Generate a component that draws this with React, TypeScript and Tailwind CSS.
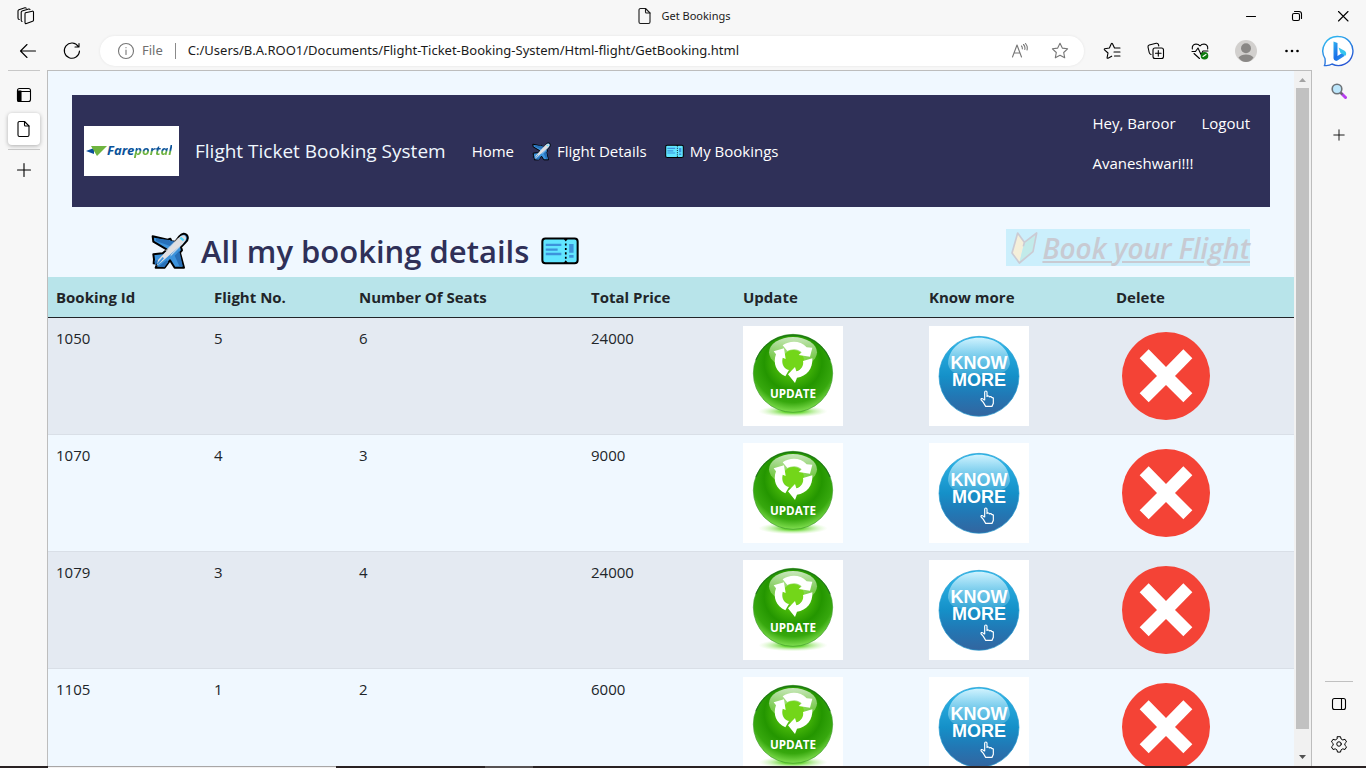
import type { ReactNode } from "react";

type Booking = { id: number; flight: number; seats: number; price: number };

const bookings: Booking[] = [
  { id: 1050, flight: 5, seats: 6, price: 24000 },
  { id: 1070, flight: 4, seats: 3, price: 9000 },
  { id: 1079, flight: 3, seats: 4, price: 24000 },
  { id: 1105, flight: 1, seats: 2, price: 6000 },
];

function Icon({ size = "size-5", children, box = "0 0 20 20" }: { size?: string; children: ReactNode; box?: string }) {
  return (
    <svg
      className={`${size} shrink-0`}
      viewBox={box}
      fill="none"
      stroke="currentColor"
      strokeWidth="1.1"
      strokeLinecap="round"
      strokeLinejoin="round"
      aria-hidden="true"
    >
      {children}
    </svg>
  );
}

function IconButton({ label, className = "w-11", children }: { label: string; className?: string; children: ReactNode }) {
  return (
    <button type="button" aria-label={label} className={`flex h-8 shrink-0 items-center justify-center ${className}`}>
      {children}
    </button>
  );
}

function PageIcon() {
  return (
    <Icon>
      <path d="M5.500 2.500h5l4.500 4.500v9a1.500 1.500 0 0 1-1.500 1.500h-8A1.500 1.500 0 0 1 4 16V4a1.500 1.500 0 0 1 1.500-1.500z" />
      <path d="M10.500 2.500V6A1 1 0 0 0 11.500 7H15" />
    </Icon>
  );
}

function PlusIcon({ size = "size-5" }: { size?: string }) {
  return (
    <Icon size={size}>
      <path d="M10 3.500v13M3.500 10h13" />
    </Icon>
  );
}

function PlaneEmoji({ className }: { className: string }) {
  return (
    <svg className={`${className} shrink-0`} viewBox="334 69 114 114" strokeLinejoin="round" aria-hidden="true">
      <path
        d="M339 82l45 10 8-3 4 8 11 1 12-16c8-9 17-10 22-4 5 6 4 15-4 23l-13 13 3 10-6 7 12 45h-28l-14-22-16 22h-27l5-12-11-1 1-12-2-15 28-3 13-11-41-24z"
        fill="#3c93dc"
        stroke="#000"
        strokeWidth="6"
      />
      <path d="M382 92l25 6-14 14-44-16v-8zM405 140l14-15 10 46h-10zM345 155l15-3-14 18zM357 172l24-18 5 5-12 16z" fill="#2870b8" />
      <path d="M418 86c8-9 16-8 19-4 4 5 2 12-5 19l-66 58-15 12 4-18z" fill="#dfdfe2" />
      <path d="M378 126l40-40M393 140l38-38" stroke="#eeeef0" strokeWidth="3" />
      <path d="M422 86l10 8" stroke="#50d9ff" strokeWidth="7" />
      <path d="M353 166l18-20" stroke="#3c93dc" strokeWidth="5" />
    </svg>
  );
}

function TicketEmoji({ className }: { className: string }) {
  return (
    <svg className={`${className} shrink-0`} viewBox="295 340 112 112" aria-hidden="true">
      <rect x="299" y="359" width="104" height="73" rx="9" fill="#61e5ff" stroke="#000" strokeWidth="6" />
      <path d="M361 359l7 9 7-9zM361 432l7-9 7 9z" fill="#000" />
      <path d="M368 374v46" stroke="#000" strokeWidth="5" strokeDasharray="6 7" />
      <path d="M309 378h46M309 392h35M309 405h46" stroke="#3c93dc" strokeWidth="7" />
      <path d="M378 375h13v26h-13zM378 408h13v8h-13z" fill="#3c93dc" />
    </svg>
  );
}

function LeafEmoji({ className }: { className: string }) {
  return (
    <svg className={`${className} shrink-0`} viewBox="90 66 84 100" strokeLinejoin="round" aria-hidden="true">
      <path d="M113 71l20 28-15 61-22-29z" fill="#f4efda" />
      <path d="M170 71l-37 28-15 61 41-33z" fill="#c2ebea" />
      <path d="M113 71l20 28 37-28-11 56-41 34-22-30zM133 99l-3 12" fill="none" stroke="#cbcbd4" strokeWidth="5" />
    </svg>
  );
}

function UpdateBadge() {
  return (
    <svg className="size-[100px]" viewBox="39 48 300 300" aria-hidden="true">
      <defs>
        <radialGradient id="green" cx=".5" cy=".36" r=".66">
          <stop offset="0" stopColor="#7ade18" />
          <stop offset=".22" stopColor="#50c00c" />
          <stop offset=".55" stopColor="#249600" />
          <stop offset=".78" stopColor="#37a80e" />
          <stop offset="1" stopColor="#8ee85c" />
        </radialGradient>
        <linearGradient id="greenGloss" x2="0" y2="1">
          <stop offset="0" stopColor="#fff" stopOpacity=".75" />
          <stop offset="1" stopColor="#b6f080" stopOpacity=".3" />
        </linearGradient>
        <radialGradient id="glow">
          <stop offset=".3" stopColor="#6fd93c" />
          <stop offset="1" stopColor="#c8f5ad" stopOpacity="0" />
        </radialGradient>
      </defs>
      <path fill="#fff" d="M39 48h300v300H39z" />
      <ellipse cx="189" cy="304" rx="104" ry="18" fill="url(#glow)" />
      <ellipse cx="189" cy="190" rx="119" ry="117" fill="url(#green)" stroke="#3e9a2a" strokeWidth="2" />
      <path d="M78 150A119 117 0 0 1 300 150" fill="none" stroke="#1c701a" strokeWidth="3" />
      <ellipse cx="189" cy="127" rx="72" ry="46" fill="url(#greenGloss)" />
      <circle cx="190" cy="152" r="32" fill="#73d619" />
      <g fill="#fff">
        <path d="M158 106C178 92 210 90 230 112L247 113L240 140L206 135L215 127C202 114 184 117 172 123Z" />
        <path d="M131 124L162 115L167 147L158 143C153 161 162 176 177 180L166 199C138 186 128 160 138 133Z" />
        <path d="M219 153L247 145C249 176 230 200 201 203L195 219L174 193L195 171L199 184C214 180 222 166 219 153Z" />
      </g>
      <text x="189" y="264" textAnchor="middle" fill="#fff" fontFamily="Open Sans, sans-serif" fontWeight="700" fontSize="35">
        UPDATE
      </text>
    </svg>
  );
}

function KnowMoreBadge() {
  return (
    <svg className="size-[100px]" viewBox="597 48 300 300" aria-hidden="true">
      <defs>
        <linearGradient id="blue" x2="0" y2="1">
          <stop offset="0" stopColor="#31b9ea" />
          <stop offset=".5" stopColor="#1590c8" />
          <stop offset=".75" stopColor="#2277b4" />
          <stop offset="1" stopColor="#33659f" />
        </linearGradient>
        <linearGradient id="blueGloss" x2="0" y2="1">
          <stop offset="0" stopColor="#d8f5ff" stopOpacity=".95" />
          <stop offset="1" stopColor="#7fd0ee" stopOpacity=".3" />
        </linearGradient>
      </defs>
      <path fill="#fff" d="M597 48h300v300H597z" />
      <circle cx="747" cy="199" r="120" fill="url(#blue)" stroke="#259bd0" strokeWidth="2" />
      <path d="M654 162C656 110 700 83 747 83S838 110 840 162C830 198 790 192 747 195S662 200 654 162Z" fill="url(#blueGloss)" />
      <g fill="#fff" fontFamily="Liberation Sans, Arial, sans-serif" fontWeight="700" fontSize="54" textAnchor="middle">
        <text x="747" y="177">KNOW</text>
        <text x="747" y="229">MORE</text>
      </g>
      <path
        d="M764 271V247q0-4 3.500-4t3.500 4v14q0-4 4-3t3 4q0-3 4-2t3 4q0-2 3-1t2 4v13l-4 9h-19l-7-12-7-8q0-5 5-3l6 5"
        fill="none"
        stroke="#fff"
        strokeWidth="3.500"
      />
    </svg>
  );
}

function DeleteBadge() {
  return (
    <svg className="size-[100px]" viewBox="108 48 300 300" aria-hidden="true">
      <circle cx="258" cy="198" r="132" fill="#f44336" />
      <path d="M206 118l52 53 52-53 27 27-52 53 52 52-27 27-52-52-52 52-27-27 52-52-52-53z" fill="#fff" />
    </svg>
  );
}

function BingIcon() {
  return (
    <svg className="size-8" viewBox="0 0 32 32" aria-hidden="true">
      <defs>
        <linearGradient id="bubble" x1="0" y1="0" x2=".6" y2="1">
          <stop offset="0" stopColor="#30c4f4" />
          <stop offset="1" stopColor="#2857d4" />
        </linearGradient>
        <linearGradient id="bing" x1="0" y1="0" x2="1" y2="1">
          <stop offset="0" stopColor="#2fb4f0" />
          <stop offset=".5" stopColor="#1b6fe8" />
          <stop offset="1" stopColor="#2f9fee" />
        </linearGradient>
      </defs>
      <path d="M16.500 1.500a14.500 14.500 0 1 1-6.500 27.500c-2 1.400-4.500 1.800-7.500 1.500 1-2 .8-4 .5-7A14.500 14.500 0 0 1 16.500 1.500z" fill="#fff" stroke="url(#bubble)" strokeWidth="1.400" />
      <path d="M11.500 6.500l4 1.600v13l7-4.500v4.500l-7 4.500c-2 1-4-.5-4-2.500z" fill="url(#bing)" />
      <path d="M16.500 12.500l6 3.200c1.800 1 2.200 3.300 1 5l-5-2.700z" fill="#35c5ee" />
    </svg>
  );
}

function TitleBar() {
  return (
    <div className="grid h-8 grid-cols-[1fr_auto_1fr] items-center">
      <div className="pl-1">
        <IconButton label="Workspaces">
          <Icon>
            <path d="M9.500 6.800l6.800-1.600q1.200-.2 1.200 1v8q0 .9-.9 1.100l-6.100 2.200q-1.500.4-1.500-1V8q0-1 .5-1.200zM6 15.500q-.8-.3-.8-1.200V6.300q0-1 .9-1.300l6.600-2q1-.2 1.300.6M3.300 13.500Q2 13.500 2 12V5q0-1 .9-1.300l6-1.900q1-.2 1.300.5" />
          </Icon>
        </IconButton>
      </div>
      <div className="flex items-center gap-1.5 font-['Noto_Sans',sans-serif] text-[11px] text-[#1b1b1b]">
        <PageIcon />
        Get Bookings
      </div>
      <div className="flex justify-end">
        <IconButton label="Minimize" className="w-[46px]">
          <Icon size="size-4" box="0 0 16 16"><path d="M3.500 8.500h9" /></Icon>
        </IconButton>
        <IconButton label="Restore" className="w-[46px]">
          <Icon size="size-4" box="0 0 16 16">
            <rect x="3.500" y="5.500" width="7" height="7" rx="1.500" />
            <path d="M5.500 3.500h4.500a2.500 2.500 0 0 1 2.500 2.500v4.500" />
          </Icon>
        </IconButton>
        <IconButton label="Close" className="w-[46px]">
          <Icon size="size-4" box="0 0 16 16"><path d="M3.500 3.500l9.500 9.500M13 3.500L3.500 13" /></Icon>
        </IconButton>
      </div>
    </div>
  );
}

function Toolbar() {
  return (
    <div className="flex h-[38px] items-center pr-1 pl-1.5">
      <IconButton label="Back">
        <Icon><path d="M17.500 10H2.500M9 3.500L2.500 10 9 16.500" /></Icon>
      </IconButton>
      <IconButton label="Refresh">
        <Icon><path d="M16.300 5.500A7.600 7.600 0 1 0 17.500 10M17 2.500V6h-4" /></Icon>
      </IconButton>
      <div className="mx-1.5 flex h-[30px] min-w-0 flex-1 items-center rounded-full bg-white pr-3.5 pl-4 font-['Noto_Sans',sans-serif] shadow-[0_0_3px_rgba(0,0,0,0.08)]">
        <Icon>
          <g stroke="#767676"><circle cx="10" cy="10" r="7.500" /><path d="M10 9v4.500M10 6.500v.2" /></g>
        </Icon>
        <span className="ml-1.5 text-[13px] text-[#6f6f6f]">File</span>
        <span className="mx-3 h-4 w-px bg-[#8a8a8a]" />
        <input
          aria-label="Address"
          className="min-w-0 flex-1 bg-transparent text-[13px] text-[#1b1b1b] outline-none"
          defaultValue="C:/Users/B.A.ROO1/Documents/Flight-Ticket-Booking-System/Html-flight/GetBooking.html"
        />
        <div className="flex gap-5 text-[#767676]">
          <button type="button" aria-label="Read aloud">
            <Icon><path d="M2.500 16L7 4l4.500 12M4 12h6M11.500 5q1 1 .8 3M13.500 3.500q2 2 1.300 5M15.500 2.500q2.500 3 1.500 6.500" /></Icon>
          </button>
          <button type="button" aria-label="Add to favorites">
            <Icon><path d="M10 2.200l2.300 4.900 5.300.7-3.900 3.700 1 5.300L10 14.300l-4.700 2.500 1-5.300-3.900-3.700 5.300-.7z" /></Icon>
          </button>
        </div>
      </div>
      <IconButton label="Favorites">
        <Icon><path d="M18 7h-5.500l-2-4.200q-.6-.9-1.200 0L7.400 7l-4.600.7q-.9.300-.3 1.100L6 12l-.9 4.700q0 .9.900.5l3.700-2M12 11h6M12.500 15H18" /></Icon>
      </IconButton>
      <IconButton label="Collections">
        <Icon>
          <rect x="7" y="7" width="10.500" height="10.500" rx="2" />
          <path d="M12.300 9.500v5.600M9.500 12.300h5.600M5 13.500Q3.500 13 3.200 11.500L2 6q-.2-1.500 1.200-2l7-1.700Q12 2 12.400 3.500l.4 1.500" />
        </Icon>
      </IconButton>
      <IconButton label="Browser essentials">
        <Icon>
          <path d="M2.300 8Q1.800 3.500 6 3q2.500 0 4 2 1.500-2 4-2 4.200.5 3.700 5M2 10.500h3.500L8 7l3 6.500 2-3.500h5M4 12.500l5.500 5" />
          <circle cx="14.500" cy="14.700" r="3.800" fill="#0f7b0f" stroke="none" />
          <path d="M13 15.500l3-2" stroke="#fff" />
        </Icon>
      </IconButton>
      <IconButton label="Profile" className="w-12">
        <svg className="size-[22px]" viewBox="0 0 22 22" aria-hidden="true">
          <circle cx="11" cy="11" r="11" fill="#d2d0ce" />
          <circle cx="11" cy="8.300" r="5" fill="#8a8886" />
          <path d="M3.500 17.500Q6 14.500 11 14.500t7.500 3Q15.500 22 11 22t-7.500-4.500z" fill="#8a8886" />
        </svg>
      </IconButton>
      <IconButton label="Settings and more">
        <svg className="size-5" viewBox="0 0 20 20" aria-hidden="true">
          <circle cx="4.500" cy="10" r="1.300" /><circle cx="10" cy="10" r="1.300" /><circle cx="15.500" cy="10" r="1.300" />
        </svg>
      </IconButton>
      <IconButton label="Bing chat" className="w-12"><BingIcon /></IconButton>
    </div>
  );
}

function TabRail() {
  return (
    <aside className="flex w-[47px] shrink-0 flex-col items-center">
      <div className="h-px w-8 bg-[#c8c8c8]" />
      <IconButton label="Tab actions" className="mt-2 w-8">
        <Icon size="size-4" box="0 0 16 16">
          <rect x="1.500" y="1.500" width="13" height="13" rx="2" />
          <path d="M1.500 4h3.500v10.500H3q-1.500 0-1.500-1.500z" fill="currentColor" />
          <path d="M1.500 4.500h13" />
        </Icon>
      </IconButton>
      <button type="button" aria-label="Get Bookings tab" className="mt-0.5 flex size-8 items-center justify-center rounded bg-white shadow-[0_1px_4px_rgba(0,0,0,0.3)]">
        <PageIcon />
      </button>
      <div className="mt-1 h-px w-8 bg-[#c8c8c8]" />
      <IconButton label="New tab" className="mt-1 w-8"><PlusIcon /></IconButton>
    </aside>
  );
}

function AppRail() {
  return (
    <aside className="flex w-[54px] shrink-0 flex-col items-center pt-[5px] pb-1.5">
      <IconButton label="Search" className="w-8">
        <svg className="size-4" viewBox="0 0 16 16" aria-hidden="true">
          <path d="M10.500 10.500l4 4" stroke="#b83df0" strokeWidth="3" strokeLinecap="round" />
          <path d="M9.500 9.500l2 2" stroke="#666" strokeWidth="2" />
          <circle cx="6" cy="6" r="4.800" fill="#bce6fb" stroke="#6d7378" strokeWidth="1.600" />
        </svg>
      </IconButton>
      <IconButton label="Customize" className="mt-3 w-8"><PlusIcon size="size-4" /></IconButton>
      <div className="mt-auto h-px w-7 bg-[#c0c0c0]" />
      <IconButton label="Toggle sidebar" className="mt-1.5 w-8">
        <Icon size="size-4" box="0 0 16 16">
          <rect x="1.500" y="2.500" width="13" height="11" rx="2" />
          <path d="M10.500 2.500v11" />
        </Icon>
      </IconButton>
      <IconButton label="Settings" className="mt-2 w-8">
        <Icon size="size-[18px]">
          <circle cx="10" cy="10" r="2.500" />
          <path d="M8.300 1.900h3.400l.6 2.500 1.900 1.100 2.500-.7 1.700 2.900-1.900 1.800v1.900l1.900 1.800-1.700 2.900-2.500-.7-1.900 1.100-.6 2.500H8.300l-.6-2.500-1.900-1.100-2.500.7-1.700-2.900 1.900-1.800V9.500L1.600 7.700l1.700-2.900 2.500.7 1.900-1.100z" />
        </Icon>
      </IconButton>
    </aside>
  );
}

function Logo() {
  return (
    <a href="#home" className="flex h-[50px] w-[95px] shrink-0 items-center bg-white pl-0.5">
      <svg className="h-3 w-[21px] shrink-0" viewBox="0 0 21 12" aria-hidden="true">
        <path d="M0 6l8-3v6z" fill="#0b4f9c" />
        <path d="M5 1h16l-10 10-3-5z" fill="#6fb43f" />
      </svg>
      <span className="text-[13px] font-bold text-[#0b5299] italic">
        Fare
        <span className="bg-linear-to-b from-[#0b5299] from-50% to-[#6fb43f] to-60% bg-clip-text text-transparent">portal</span>
      </span>
    </a>
  );
}

function NavBar() {
  return (
    <nav className="mx-6 mt-6 flex h-28 justify-between bg-[#2f3058] pr-5 pl-3 text-[15px] text-white">
      <div className="flex items-center">
        <Logo />
        <span className="ml-4 text-[19px] whitespace-nowrap text-[#f0f8ff]">Flight Ticket Booking System</span>
        <a href="#home" className="ml-[26px]">Home</a>
        <a href="#flights" className="ml-[18px] flex items-center gap-1.5 whitespace-nowrap">
          <PlaneEmoji className="size-[19px]" />
          Flight Details
        </a>
        <a href="#bookings" className="ml-[18px] flex items-center gap-1.5 whitespace-nowrap">
          <TicketEmoji className="size-[19px]" />
          My Bookings
        </a>
      </div>
      <div className="flex gap-6 pt-2 leading-10">
        <p className="w-[85px]">Hey, Baroor Avaneshwari!!!</p>
        <a href="#logout">Logout</a>
      </div>
    </nav>
  );
}

const badges = [
  { label: "Update", badge: <UpdateBadge /> },
  { label: "Know more about", badge: <KnowMoreBadge /> },
  { label: "Delete", badge: <DeleteBadge /> },
];

function BookingTable() {
  return (
    <table className="w-full table-fixed text-left text-[15px] text-[#212529]">
      <colgroup>
        <col className="w-[158px]" />
        <col className="w-[145px]" />
        <col className="w-[232px]" />
        <col className="w-[152px]" />
        <col className="w-[186px]" />
        <col className="w-[187px]" />
        <col className="w-[186px]" />
      </colgroup>
      <thead>
        <tr className="h-10 border-b border-[#212529] bg-[#b8e4ea]">
          {["Booking Id", "Flight No.", "Number Of Seats", "Total Price", "Update", "Know more", "Delete"].map((title) => (
            <th key={title} scope="col" className="px-2 font-bold">{title}</th>
          ))}
        </tr>
      </thead>
      <tbody>
        {bookings.map((b) => (
          <tr key={b.id} className="border-b border-[#d9dfe7] align-top odd:bg-[#e4eaf2]">
            {[b.id, b.flight, b.seats, b.price].map((value, i) => (
              <td key={i} className="px-2 py-2 leading-6">{value}</td>
            ))}
            {badges.map(({ label, badge }) => (
              <td key={label} className="p-2">
                <button type="button" aria-label={`${label} booking ${b.id}`} className="block">{badge}</button>
              </td>
            ))}
          </tr>
        ))}
      </tbody>
    </table>
  );
}

function Scrollbar() {
  return (
    <div className="flex w-[17px] shrink-0 flex-col items-center bg-[#f1f1f1]" aria-hidden="true">
      <svg className="size-[17px] shrink-0" viewBox="0 0 17 17"><path d="M5 11l3.500-4 3.500 4z" fill="#a3a3a3" /></svg>
      <div className="flex w-[13px] flex-1 flex-col">
        <div className="grow-[97] bg-[#c1c1c1]" />
        <div className="grow-[3]" />
      </div>
      <svg className="size-[17px] shrink-0" viewBox="0 0 17 17"><path d="M5 6l3.500 4L12 6z" fill="#505050" /></svg>
    </div>
  );
}

export default function App() {
  return (
    <div className="flex h-screen flex-col overflow-hidden bg-[#f7f7f7] font-['Open_Sans','Noto_Sans',sans-serif] text-black">
      <header>
        <TitleBar />
        <Toolbar />
      </header>
      <div className="flex min-h-0 flex-1">
        <TabRail />
        <div className="flex min-w-0 flex-1 border border-b-0 border-[#bdbdbd]">
          <main className="min-w-0 flex-1 overflow-hidden bg-[#f0f8ff]">
            <NavBar />
            <div className="flex h-[70px] items-start justify-between pr-11 pl-[103px]">
              <h1 className="flex items-center gap-3 pt-6 text-[31px] leading-10 font-semibold whitespace-nowrap text-[#2f3058]">
                <PlaneEmoji className="size-[38px]" />
                All my booking details
                <TicketEmoji className="size-[38px]" />
              </h1>
              <a
                href="#book"
                className="mt-[22px] flex h-[37px] items-center gap-1 bg-[#cbeffc] pl-1 text-[28px] font-semibold whitespace-nowrap text-[#c8cad2] italic underline"
              >
                <LeafEmoji className="h-[34px] w-7" />
                Book your Flight
              </a>
            </div>
            <BookingTable />
          </main>
          <Scrollbar />
        </div>
        <AppRail />
      </div>
      <div className="flex h-0.5 shrink-0 bg-[#2a2223]">
        <div className="ml-12 w-72 border-t border-[#a8a6a6] bg-[#f3f1f1]" />
        <div className="ml-[149px] w-12 bg-[#575253]" />
      </div>
    </div>
  );
}
